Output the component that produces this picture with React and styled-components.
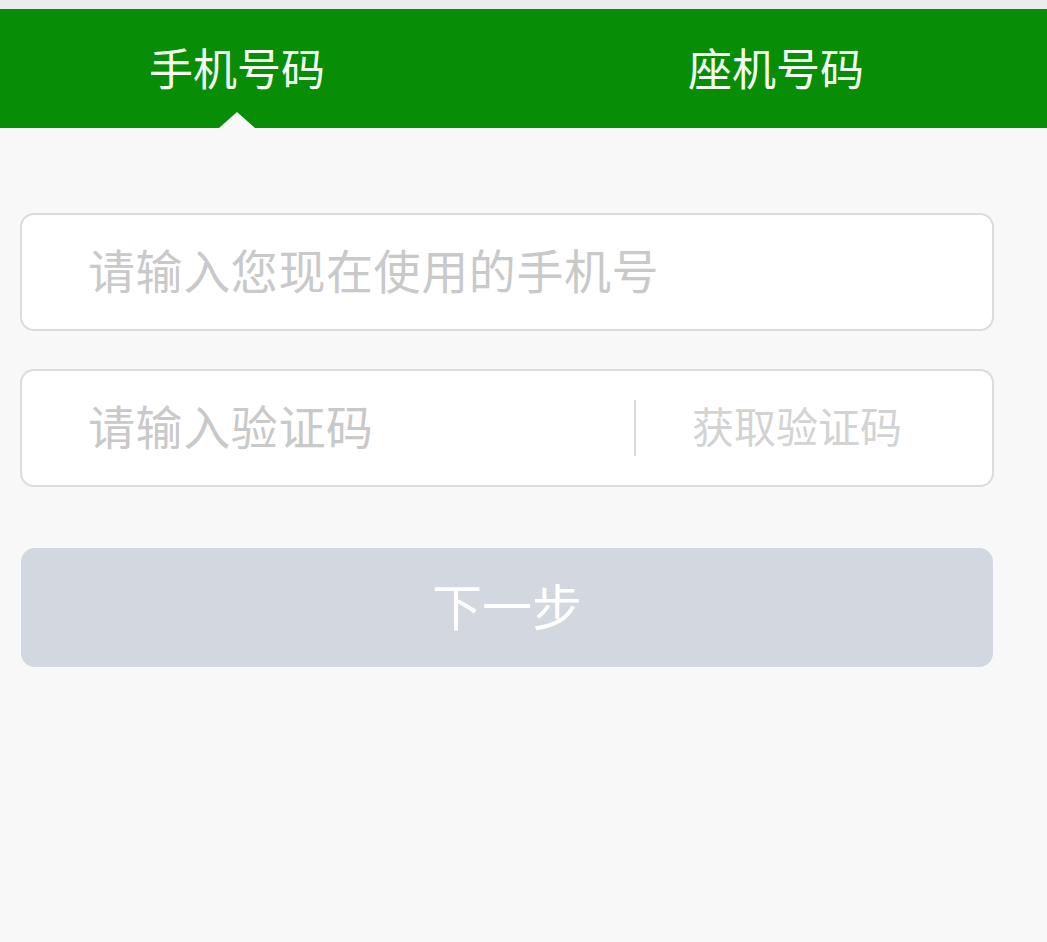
import React from "react";
import styled, {createGlobalStyle} from "styled-components";

const Global = createGlobalStyle`
    html,body{margin:0;padding:0;background:#f8f8f8;}
    body{font-family:"Noto Sans CJK SC","Noto Sans",sans-serif;}
    *{box-sizing:border-box;}
`;

const Page = styled.div`
    min-height:100vh;background:#f8f8f8;border-top:9px solid #ececec;overflow:hidden;
`;

const TabBar = styled.nav`
    height:119px;background:#078e06;display:grid;grid-template-columns:300px 300px;column-gap:239px;padding-left:87px;
`;

const Tab = styled.div`
    position:relative;display:flex;align-items:center;justify-content:center;padding-bottom:4px;
    font-size:44px;color:#f4fff2;letter-spacing:0;
    &::after{
        content:"";display:${p => (p.$active ? "block" : "none")};position:absolute;left:50%;bottom:0;margin-left:-18px;
        border-left:18px solid transparent;border-right:18px solid transparent;border-bottom:16px solid #f8f8f8;
    }
`;

const Form = styled.form`
    display:flex;flex-direction:column;row-gap:38px;padding:85px 53px 0 20px;
`;

const Field = styled.div`
    height:118px;background:#fff;border:2px solid #dcdcdc;border-radius:14px;display:flex;align-items:center;
`;

const Input = styled.input`
    flex:1;min-width:0;height:100%;border:0;outline:0;background:transparent;padding:0 0 8px 66px;
    font-family:inherit;font-size:47px;letter-spacing:0.6px;color:#333;
    &::placeholder{color:#c9c9c9;}
`;

const Divider = styled.span`
    width:2px;height:56px;background:#dadada;
`;

const CodeButton = styled.button`
    border:0;background:transparent;padding:0 90px 8px 56px;font-family:inherit;font-size:42px;color:#d3d3d3;cursor:pointer;
`;

const Submit = styled.button`
    margin-top:23px;margin-left:1px;margin-right:1px;height:119px;padding:0 0 8px;border:0;border-radius:14px;background:#d3d8e0;
    color:#fff;font-family:inherit;font-size:50px;
`;

const App = () => {
    return (
        <Page>
            <Global />
            <TabBar>
                <Tab $active>手机号码</Tab>
                <Tab>座机号码</Tab>
            </TabBar>
            <Form onSubmit={e => e.preventDefault()}>
                <Field>
                    <Input placeholder="请输入您现在使用的手机号" />
                </Field>
                <Field>
                    <Input placeholder="请输入验证码" />
                    <Divider />
                    <CodeButton type="button">获取验证码</CodeButton>
                </Field>
                <Submit type="submit">下一步</Submit>
            </Form>
        </Page>
    );
};

export default App;
